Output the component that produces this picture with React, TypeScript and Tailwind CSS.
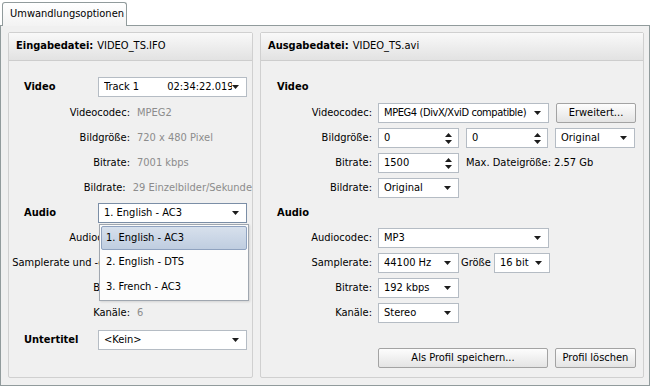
import { ReactNode } from "react";

function Arrow() {
  return (
    <svg width="7" height="4" viewBox="0 0 7 4" className="shrink-0">
      <path d="M0 0h7L3.5 4z" fill="#1c1c1c" />
    </svg>
  );
}

function SpinArrows() {
  return (
    <svg width="7" height="11" viewBox="0 0 7 11" className="shrink-0">
      <path d="M3.5 0L7 4H0z" fill="#1c1c1c" />
      <path d="M0 7h7L3.5 11z" fill="#1c1c1c" />
    </svg>
  );
}

function Select({
  children,
  className = "",
  focus = false,
}: {
  children: ReactNode;
  className?: string;
  focus?: boolean;
}) {
  return (
    <div
      className={`flex h-[20px] items-center justify-between border bg-white pl-[5px] pr-[7px] ${
        focus ? "border-[#7b8ea6]" : "border-[#b5bcc4]"
      } ${className}`}
    >
      <div className="min-w-0 flex-1 overflow-hidden whitespace-nowrap">{children}</div>
      <Arrow />
    </div>
  );
}

function Spinner({ value, className = "" }: { value: string; className?: string }) {
  return (
    <div
      className={`flex h-[20px] items-center justify-between border border-[#b5bcc4] bg-white pl-[5px] pr-[6px] ${className}`}
    >
      <span>{value}</span>
      <SpinArrows />
    </div>
  );
}

function Button({ label, className = "" }: { label: string; className?: string }) {
  return (
    <div
      className={`flex h-[20px] items-center justify-center rounded-[2px] border border-[#a3a3a3] bg-gradient-to-b from-[#fdfdfd] to-[#e4e4e4] ${className}`}
    >
      {label}
    </div>
  );
}

function InfoRow({ label, value }: { label: string; value: string }) {
  return (
    <div className="flex h-[25px] items-center whitespace-nowrap">
      <span className="w-[121px] text-right">{label}</span>
      <span className="ml-[7px] text-[#8c8c8c]">{value}</span>
    </div>
  );
}

// rows lying under the open list: only the start of the label shows
function CoveredRow({ label }: { label: string }) {
  return (
    <div className="flex h-[25px] items-center whitespace-nowrap">
      <div className="w-[90px] overflow-hidden">
        <div className="w-[121px] text-right">{label}</div>
      </div>
    </div>
  );
}

function OutRow({ label, children }: { label: string; children: ReactNode }) {
  return (
    <div className="flex h-[20px] items-center whitespace-nowrap">
      <span className="w-[111px] text-right">{label}</span>
      <div className="ml-[6px] flex items-center">{children}</div>
    </div>
  );
}

function GroupHeader({ title, file }: { title: string; file: string }) {
  return (
    <div className="flex h-[28px] items-center border-b border-[#cdcdcd] bg-gradient-to-b from-[#f9f9f9] to-[#e2e2e2] pl-[7px]">
      <span className="font-bold">{title}</span>
      <span className="ml-[4px]">{file}</span>
    </div>
  );
}

export default function App() {
  const audioTracks = ["1. English - AC3", "2. English - DTS", "3. French - AC3"];

  return (
    <div className="h-[387px] w-[650px] bg-white font-['DejaVu_Sans_Condensed','DejaVu_Sans',sans-serif] text-[11px] text-black [font-stretch:condensed]">
      <div className="flex h-[25px] items-end pl-[2px]">
        <div className="relative z-10 -mb-px flex h-[24px] w-[125px] items-center rounded-t-[3px] border border-b-0 border-[#919b9c] bg-gradient-to-b from-[#ffffff] to-[#f3f3f3] pl-[7px]">
          Umwandlungsoptionen
        </div>
      </div>

      <div className="flex h-[361px] gap-[7px] border border-[#919b9c] bg-[#f0f0f0] pb-[7px] pl-[7px] pr-[5px] pt-[6px]">
        {/* input file */}
        <div className="relative flex w-[245px] flex-col rounded-[2px] border border-[#d0d0d0]">
          <GroupHeader title="Eingabedatei:" file="VIDEO_TS.IFO" />

          <div className="flex flex-col pt-[16px]">
            <div className="flex h-[20px] items-center">
              <span className="w-[89px] pl-[15px] font-bold">Video</span>
              <Select className="w-[149px]">
                <div className="flex">
                  <span>Track 1</span>
                  <span className="ml-[28px]">02:34:22.019</span>
                </div>
              </Select>
            </div>

            <div className="mt-[4px]">
              <InfoRow label="Videocodec:" value="MPEG2" />
              <InfoRow label="Bildgröße:" value="720 x 480 Pixel" />
              <InfoRow label="Bitrate:" value="7001 kbps" />
              <InfoRow label="Bildrate:" value="29 Einzelbilder/Sekunde" />
            </div>

            <div className="mt-[2px] flex h-[20px] items-center">
              <span className="w-[89px] pl-[15px] font-bold">Audio</span>
              <Select className="w-[149px]" focus>
                1. English - AC3
              </Select>
            </div>

            <div className="mt-[3px]">
              <CoveredRow label="Audiocodec:" />
              <CoveredRow label="Samplerate und -größe:" />
              <CoveredRow label="Bitrate:" />
              <InfoRow label="Kanäle:" value="6" />
            </div>

            <div className="mt-[4px] flex h-[20px] items-center">
              <span className="w-[89px] pl-[15px] font-bold">Untertitel</span>
              <Select className="w-[149px]">&lt;Kein&gt;</Select>
            </div>
          </div>

          {/* open audio list */}
          <div className="absolute left-[90px] top-[191px] flex h-[77px] w-[150px] flex-col border border-[#a0a7b0] bg-[#fcfcfc] p-[1px] shadow-[1px_1px_2px_rgba(0,0,0,0.12)]">
            {audioTracks.map((t, i) => (
              <div
                key={t}
                className={`flex h-[24.5px] items-center pl-[4px] ${
                  i === 0
                    ? "rounded-[2px] border border-[#8fa2bf] bg-gradient-to-b from-[#d7e0ec] to-[#bfcde0]"
                    : "border border-transparent"
                }`}
              >
                {t}
              </div>
            ))}
          </div>
        </div>

        {/* output file */}
        <div className="flex w-[384px] flex-col rounded-[2px] border border-[#d0d0d0]">
          <GroupHeader title="Ausgabedatei:" file="VIDEO_TS.avi" />

          <div className="flex flex-col gap-[5px] pt-[16px]">
            <div className="flex h-[20px] items-center pl-[16px] font-bold">Video</div>
            <div className="mt-[1px]">
              <OutRow label="Videocodec:">
                <Select className="w-[171px] tracking-[-0.4px]">MPEG4 (DivX/XviD compatible)</Select>
                <Button label="Erweitert..." className="ml-[7px] w-[80px]" />
              </OutRow>
            </div>
            <OutRow label="Bildgröße:">
              <Spinner value="0" className="w-[81px]" />
              <Spinner value="0" className="ml-[7px] w-[82px]" />
              <Select className="ml-[7px] w-[80px]">Original</Select>
            </OutRow>
            <OutRow label="Bitrate:">
              <Spinner value="1500" className="w-[81px]" />
              <span className="ml-[7px]">Max. Dateigröße: 2.57 Gb</span>
            </OutRow>
            <OutRow label="Bildrate:">
              <Select className="w-[81px]">Original</Select>
            </OutRow>

            <div className="flex h-[20px] items-center pl-[16px] font-bold">Audio</div>
            <OutRow label="Audiocodec:">
              <Select className="w-[171px]">MP3</Select>
            </OutRow>
            <OutRow label="Samplerate:">
              <Select className="w-[81px]">44100 Hz</Select>
              <span className="ml-[2px]">Größe</span>
              <Select className="ml-[3px] w-[56px]">16 bit</Select>
            </OutRow>
            <OutRow label="Bitrate:">
              <Select className="w-[81px]">192 kbps</Select>
            </OutRow>
            <OutRow label="Kanäle:">
              <Select className="w-[81px]">Stereo</Select>
            </OutRow>

            <div className="mt-[20px] flex h-[20px] items-center pl-[117px]">
              <Button label="Als Profil speichern..." className="w-[170px]" />
              <Button label="Profil löschen" className="ml-[7px] w-[81px]" />
            </div>
          </div>
        </div>
      </div>
    </div>
  );
}
